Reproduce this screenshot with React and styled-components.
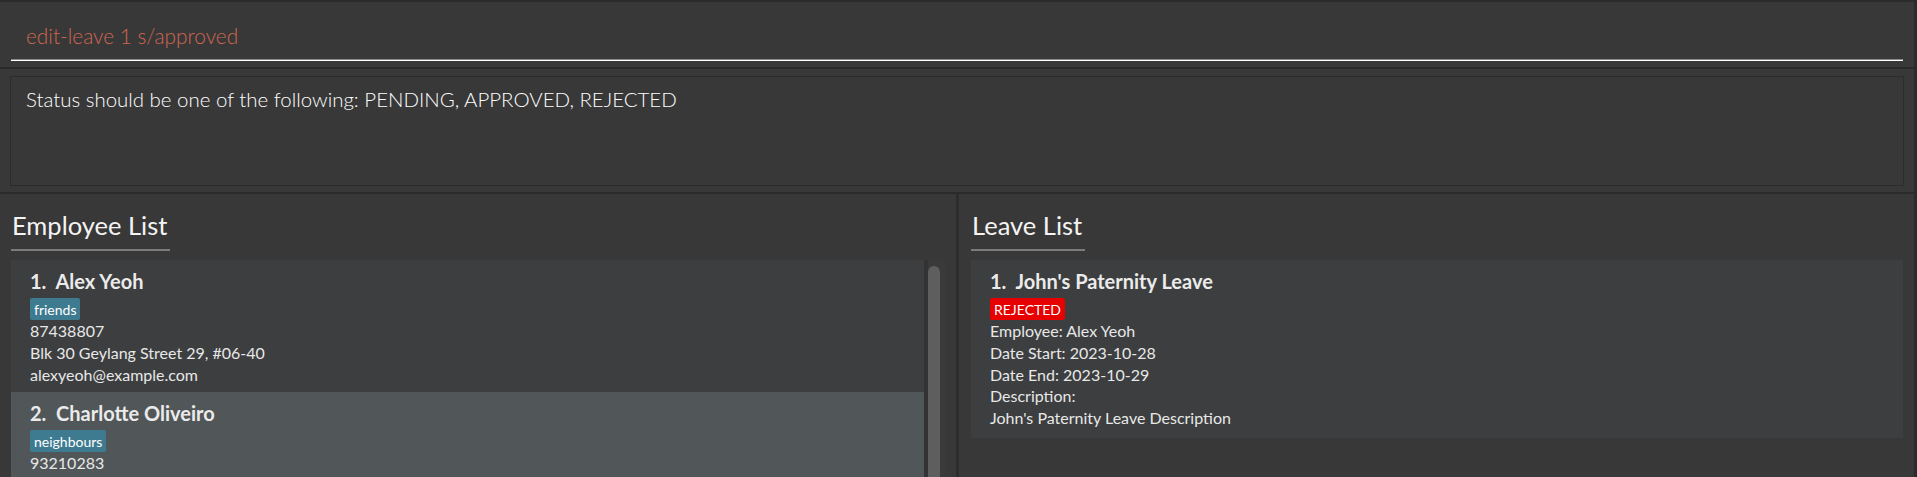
import React from "react";
import styled, { createGlobalStyle } from "styled-components";

const GlobalStyle = createGlobalStyle`
  html, body {
    margin: 0;
    padding: 0;
    background: #383838;
    overflow: hidden;
  }
  * { box-sizing: border-box; }
`;

const Window = styled.div`
  width: 1917px;
  height: 477px;
  display: flex;
  flex-direction: column;
  background: #383838;
  border-top: 2px solid #2b2b2b;
  border-right: 3px solid #2b2b2b;
  font-family: Lato, "Liberation Sans", sans-serif;
  overflow: hidden;
`;

const CommandPane = styled.div`
  height: 67px;
  padding: 0 11px 6px 11px;
  display: flex;
  align-items: flex-end;
  border-bottom: 2px solid #2a2a2a;
  flex: none;
`;

const CommandField = styled.div`
  width: 100%;
  height: 46px;
  padding: 0 0 5px 15px;
  display: flex;
  align-items: center;
  border-bottom: 1px solid #ffffff;
  box-shadow: inset 0 -1px 0 #8a8a8a;
  font-weight: 300;
  font-size: 20.8px;
  color: ${(p) => (p.$error ? "#d06651" : "#ffffff")};
`;

const ResultPane = styled.div`
  height: 125px;
  padding: 7px 10px 6px 10px;
  border-bottom: 2px solid #2a2a2a;
  flex: none;
`;

const ResultBox = styled.div`
  height: 110px;
  border: 1px solid #2c2c2c;
  padding: 7px 15px;
  font-weight: 300;
  font-size: 20.45px;
  line-height: 30px;
  color: #ffffff;
`;

const ListsRow = styled.div`
  flex: 1;
  display: grid;
  grid-template-columns: 959px 1fr;
  min-height: 0;
`;

const Panel = styled.div`
  display: flex;
  flex-direction: column;
  padding: 14px 11px 0 ${(p) => p.$padLeft || 11}px;
  border-right: ${(p) => (p.$divider ? "3px solid #2c2c2c" : "none")};
  min-height: 0;
  overflow: hidden;
`;

const PanelTitle = styled.div`
  align-self: flex-start;
  font-size: 25.5px;
  font-weight: 400;
  color: #f4f4f4;
  line-height: 34px;
  padding: 0 3px 7px 1px;
  border-bottom: 2px solid #7b7b7b;
  margin-bottom: 9px;
`;

const ListArea = styled.div`
  display: flex;
  flex: 1;
  min-height: 0;
`;

const CardList = styled.div`
  flex: 1;
  display: flex;
  flex-direction: column;
`;

const ScrollTrack = styled.div`
  width: 21px;
  flex: none;
  padding: 6px 5px 0 4px;
  background: linear-gradient(to right, #333333 0, #333333 4px, #3a3a3a 4px);
`;

const ScrollThumb = styled.div`
  width: 12px;
  height: 400px;
  border-radius: 6px;
  background: #5e5e5e;
`;

const Card = styled.div`
  background: ${(p) => (p.$odd ? "#515658" : "#3c3e3f")};
  padding: 8px 19px ${(p) => p.$padBottom || 7}px 19px;
  color: #e6e6e6;
  flex: none;
`;

const CardName = styled.div`
  font-size: 20px;
  font-weight: 700;
  line-height: 27px;
  color: #ebebeb;
  white-space: pre;
  margin-bottom: 3px;
`;

const Tags = styled.div`
  display: flex;
  gap: 5px;
`;

const Tag = styled.span`
  display: inline-flex;
  align-items: center;
  height: 22px;
  padding: 0 4px;
  border-radius: 2px;
  font-size: 14px;
  color: #ffffff;
  background: ${(p) => (p.$variant === "rejected" ? "#e60000" : "#3e7b91")};
`;

const InfoLine = styled.div`
  font-size: 16px;
  line-height: 21.8px;
  color: #e8e8e8;
`;

const employees = [
  {
    name: "Alex Yeoh",
    tags: ["friends"],
    phone: "87438807",
    address: "Blk 30 Geylang Street 29, #06-40",
    email: "alexyeoh@example.com",
  },
  {
    name: "Charlotte Oliveiro",
    tags: ["neighbours"],
    phone: "93210283",
    address: "Blk 30 Lorong 3 Serangoon Gardens, #07-18",
    email: "charlotte@example.com",
  },
];

const leaves = [
  {
    title: "John's Paternity Leave",
    status: "REJECTED",
    employee: "Alex Yeoh",
    start: "2023-10-28",
    end: "2023-10-29",
    description: "John's Paternity Leave Description",
  },
];

export default function App() {
  return (
    <>
      <GlobalStyle />
      <Window>
        <CommandPane>
          <CommandField $error>edit-leave 1 s/approved</CommandField>
        </CommandPane>
        <ResultPane>
          <ResultBox>Status should be one of the following: PENDING, APPROVED, REJECTED</ResultBox>
        </ResultPane>
        <ListsRow>
          <Panel $divider>
            <PanelTitle>Employee List</PanelTitle>
            <ListArea>
              <CardList>
                {employees.map((e, i) => (
                  <Card key={e.name} $odd={i % 2 === 1}>
                    <CardName>{`${i + 1}.  ${e.name}`}</CardName>
                    <Tags>
                      {e.tags.map((t) => (
                        <Tag key={t}>{t}</Tag>
                      ))}
                    </Tags>
                    <InfoLine>{e.phone}</InfoLine>
                    <InfoLine>{e.address}</InfoLine>
                    <InfoLine>{e.email}</InfoLine>
                  </Card>
                ))}
              </CardList>
              <ScrollTrack>
                <ScrollThumb />
              </ScrollTrack>
            </ListArea>
          </Panel>
          <Panel $padLeft={12}>
            <PanelTitle>Leave List</PanelTitle>
            <ListArea>
              <CardList>
                {leaves.map((l, i) => (
                  <Card key={l.title} $odd={i % 2 === 1} $padBottom={9}>
                    <CardName>{`${i + 1}.  ${l.title}`}</CardName>
                    <Tags>
                      <Tag $variant="rejected">{l.status}</Tag>
                    </Tags>
                    <InfoLine>Employee: {l.employee}</InfoLine>
                    <InfoLine>Date Start: {l.start}</InfoLine>
                    <InfoLine>Date End: {l.end}</InfoLine>
                    <InfoLine>Description:</InfoLine>
                    <InfoLine>{l.description}</InfoLine>
                  </Card>
                ))}
              </CardList>
            </ListArea>
          </Panel>
        </ListsRow>
      </Window>
    </>
  );
}
